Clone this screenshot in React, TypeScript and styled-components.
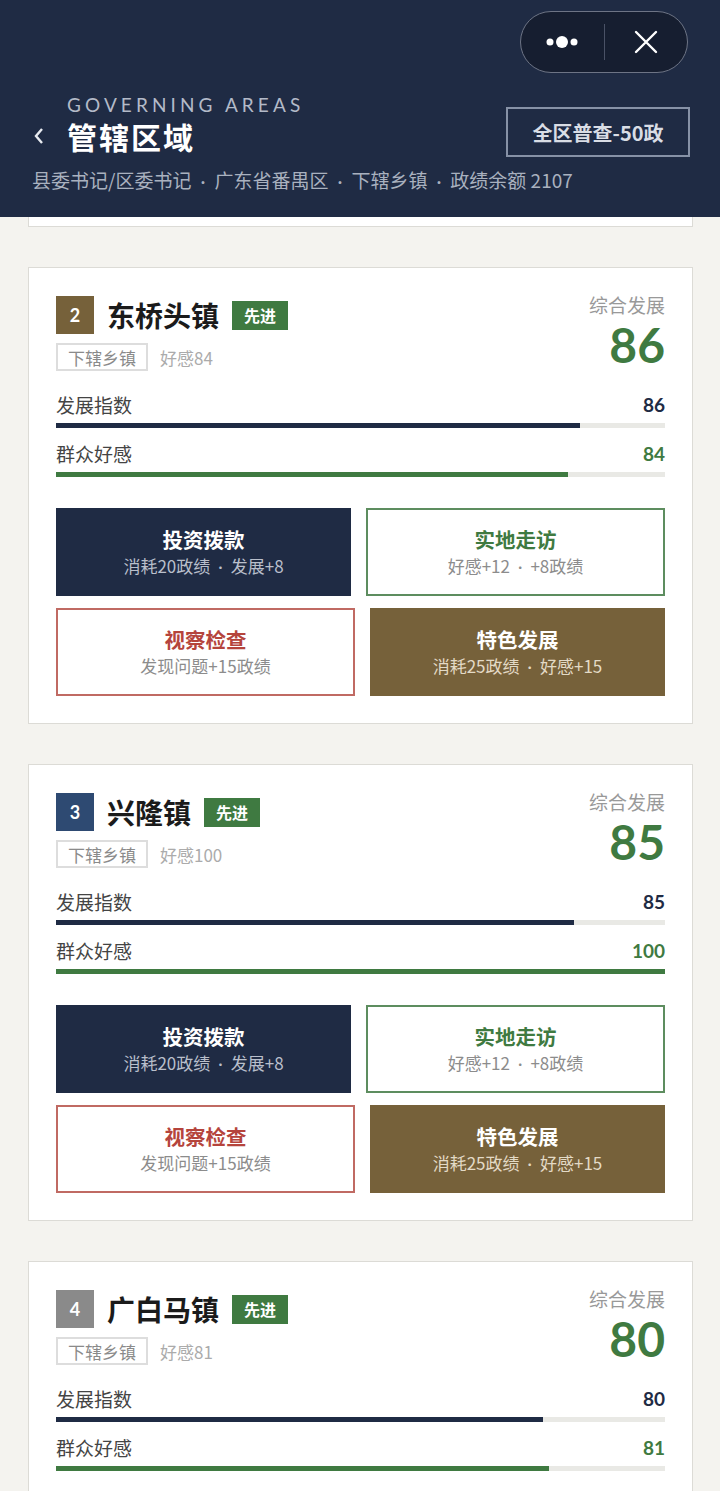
import React from "react";
import styled, { createGlobalStyle } from "styled-components";

const GlobalStyle = createGlobalStyle`
  html, body {
    margin: 0;
    padding: 0;
    background: #f4f3ef;
    font-family: "Noto Sans CJK SC", "Noto Sans", sans-serif;
  }
  body {
    height: 1491px;
    overflow: hidden;
  }
`;

const navy = "#1f2b44";
const green = "#3f7a41";
const red = "#b5443c";
const brown = "#76613a";

const Page = styled.div`
  width: 720px;
  height: 1491px;
  overflow: hidden;
`;

const Header = styled.header`
  height: 217px;
  box-sizing: border-box;
  background: ${navy};
  padding: 11px 32px 0 32px;
  display: flex;
  flex-direction: column;
`;

const CapsuleRow = styled.div`
  display: flex;
  justify-content: flex-end;
`;

const Capsule = styled.div`
  width: 168px;
  height: 62px;
  box-sizing: border-box;
  border: 1.5px solid #6d7485;
  border-radius: 31px;
  background: #161e30;
  display: flex;
  align-items: center;
`;

const CapsuleHalf = styled.div`
  flex: 1;
  display: flex;
  justify-content: center;
  align-items: center;
`;

const CapsuleDivider = styled.div`
  width: 1px;
  height: 36px;
  background: #4a5266;
`;

const TitleRow = styled.div`
  display: flex;
  align-items: flex-end;
  justify-content: space-between;
  margin-top: 21px;
`;

const TitleLeft = styled.div`
  display: flex;
  align-items: flex-end;
`;

const Back = styled.div`
  width: 35px;
  height: 40px;
  display: flex;
  align-items: center;
`;

const TitleText = styled.div`
  display: flex;
  flex-direction: column;
`;

const EnTitle = styled.div`
  font-family: "Lato", "Noto Sans", sans-serif;
  font-size: 19px;
  letter-spacing: 4.1px;
  color: #b3bac8;
  line-height: 22px;
`;

const CnTitle = styled.div`
  font-size: 30px;
  font-weight: 700;
  letter-spacing: 2px;
  color: #ffffff;
  line-height: 40px;
`;

const SurveyButton = styled.div`
  width: 184px;
  height: 50px;
  box-sizing: border-box;
  border: 2px solid #8691a6;
  color: #d9dde5;
  font-size: 20px;
  font-weight: 700;
  display: flex;
  align-items: center;
  justify-content: center;
  margin-right: -2px;
  margin-bottom: -1px;
`;

const SubLine = styled.div`
  margin-top: 10px;
  font-size: 19px;
  color: #a9b1bf;
  line-height: 28px;
  white-space: nowrap;
`;

const Dot = styled.span<{ $gap?: number }>`
  font-family: "Lato", sans-serif;
  margin: 0 ${(p) => p.$gap ?? 9}px;
`;

const List = styled.div`
  padding: 0 27px 0 28px;
  display: flex;
  flex-direction: column;
  gap: 40px;
`;

const CardStub = styled.div`
  height: 9px;
  background: #fff;
  border: 1.5px solid #dcdbd6;
  border-top: none;
`;

const Card = styled.div`
  background: #fff;
  border: 1.5px solid #dcdbd6;
  padding: 28px 27px 27px 27px;
  display: flex;
  flex-direction: column;
`;

const Top = styled.div`
  display: flex;
  justify-content: space-between;
`;

const NameRow = styled.div`
  display: flex;
  align-items: center;
  gap: 13px;
  height: 38px;
`;

const Rank = styled.div<{ $bg: string }>`
  width: 38px;
  height: 38px;
  background: ${(p) => p.$bg};
  color: #fff;
  font-family: "Lato", "Noto Sans", sans-serif;
  font-weight: 700;
  font-size: 18px;
  display: flex;
  align-items: center;
  justify-content: center;
`;

const Name = styled.div`
  font-size: 28px;
  font-weight: 700;
  color: #1b1b1b;
  line-height: 38px;
`;

const Tag = styled.div`
  background: ${green};
  color: #fff;
  font-size: 16px;
  font-weight: 700;
  height: 29px;
  padding: 0 12px;
  display: flex;
  align-items: center;
`;

const MetaRow = styled.div`
  display: flex;
  align-items: center;
  gap: 12px;
  margin-top: 9px;
`;

const MetaBox = styled.div`
  height: 28px;
  box-sizing: border-box;
  border: 2px solid #dddddd;
  padding: 0 10px;
  color: #8a8a8a;
  font-size: 17px;
  display: flex;
  align-items: center;
`;

const MetaText = styled.div`
  color: #ababab;
  font-size: 17px;
`;

const Score = styled.div`
  display: flex;
  flex-direction: column;
  align-items: flex-end;
`;

const ScoreLabel = styled.div`
  color: #999;
  font-size: 19px;
  line-height: 24px;
  margin-top: -3px;
`;

const ScoreValue = styled.div`
  color: ${green};
  font-family: "Lato", "Noto Sans", sans-serif;
  font-size: 48px;
  font-weight: 700;
  line-height: 44px;
  margin-top: 6px;
`;

const Stat = styled.div<{ $first?: boolean }>`
  margin-top: ${(p) => (p.$first ? "20px" : "12px")};
`;

const StatHead = styled.div`
  display: flex;
  justify-content: space-between;
  align-items: center;
  height: 26px;
`;

const StatLabel = styled.div`
  font-size: 19px;
  color: #444;
`;

const StatValue = styled.div<{ $color: string }>`
  font-family: "Lato", "Noto Sans", sans-serif;
  font-size: 19px;
  font-weight: 700;
  color: ${(p) => p.$color};
`;

const Track = styled.div`
  height: 5px;
  background: #e9e9e5;
  margin-top: 6px;
`;

const Fill = styled.div<{ $color: string }>`
  height: 100%;
  background: ${(p) => p.$color};
`;

const Actions = styled.div`
  margin-top: 31px;
  display: flex;
  flex-direction: column;
  gap: 12px;
`;

const ActionRow = styled.div`
  display: flex;
  gap: 15px;
`;

type Variant = "navy" | "green" | "red" | "brown";

const variantStyle: Record<
  Variant,
  { bg: string; border: string; title: string; sub: string }
> = {
  navy: { bg: navy, border: "none", title: "#fff", sub: "#b9bfcb" },
  green: { bg: "#fff", border: `2px solid #5d8d5f`, title: green, sub: "#8c8c8c" },
  red: { bg: "#fff", border: `2px solid #c06a63`, title: red, sub: "#8c8c8c" },
  brown: { bg: brown, border: "none", title: "#fff", sub: "#e3dac6" },
};

const Action = styled.div<{ $v: Variant }>`
  flex: 1 1 0;
  box-sizing: content-box;
  height: ${(p) => (variantStyle[p.$v].border === "none" ? "88px" : "84px")};
  background: ${(p) => variantStyle[p.$v].bg};
  border: ${(p) => variantStyle[p.$v].border};
  display: flex;
  flex-direction: column;
  align-items: center;
  justify-content: center;
`;

const ActionTitle = styled.div<{ $v: Variant }>`
  font-size: 20.5px;
  font-weight: 700;
  color: ${(p) => variantStyle[p.$v].title};
  line-height: 28px;
`;

const ActionSub = styled.div<{ $v: Variant }>`
  font-size: 17px;
  color: ${(p) => variantStyle[p.$v].sub};
  line-height: 26px;
`;

type Town = {
  rank: number;
  rankColor: string;
  name: string;
  favor: number;
  dev: number;
};

const towns: Town[] = [
  { rank: 2, rankColor: brown, name: "东桥头镇", favor: 84, dev: 86 },
  { rank: 3, rankColor: "#2e4a72", name: "兴隆镇", favor: 100, dev: 85 },
  { rank: 4, rankColor: "#8a8a8a", name: "广白马镇", favor: 81, dev: 80 },
];

const DotsIcon = () => (
  <svg width="40" height="20" viewBox="0 0 40 20">
    <circle cx="8" cy="10" r="3.5" fill="#fff" />
    <circle cx="20" cy="10" r="6" fill="#fff" />
    <circle cx="32" cy="10" r="3.5" fill="#fff" />
  </svg>
);

const CloseIcon = () => (
  <svg width="26" height="26" viewBox="0 0 26 26">
    <path d="M3 3 L23 23 M23 3 L3 23" stroke="#fff" strokeWidth="2.4" strokeLinecap="round" />
  </svg>
);

const BackIcon = () => (
  <svg width="14" height="20" viewBox="0 0 14 20">
    <path d="M10 3 L4 10 L10 17" stroke="#e8ebf0" strokeWidth="2.4" fill="none" />
  </svg>
);

const TownCard: React.FC<{ town: Town }> = ({ town }) => (
  <Card>
    <Top>
      <div>
        <NameRow>
          <Rank $bg={town.rankColor}>{town.rank}</Rank>
          <Name>{town.name}</Name>
          <Tag>先进</Tag>
        </NameRow>
        <MetaRow>
          <MetaBox>下辖乡镇</MetaBox>
          <MetaText>好感{town.favor}</MetaText>
        </MetaRow>
      </div>
      <Score>
        <ScoreLabel>综合发展</ScoreLabel>
        <ScoreValue>{town.dev}</ScoreValue>
      </Score>
    </Top>
    <Stat $first>
      <StatHead>
        <StatLabel>发展指数</StatLabel>
        <StatValue $color={navy}>{town.dev}</StatValue>
      </StatHead>
      <Track>
        <Fill $color={navy} style={{ width: `${town.dev}%` }} />
      </Track>
    </Stat>
    <Stat>
      <StatHead>
        <StatLabel>群众好感</StatLabel>
        <StatValue $color={green}>{town.favor}</StatValue>
      </StatHead>
      <Track>
        <Fill $color={green} style={{ width: `${town.favor}%` }} />
      </Track>
    </Stat>
    <Actions>
      <ActionRow>
        <Action $v="navy">
          <ActionTitle $v="navy">投资拨款</ActionTitle>
          <ActionSub $v="navy">
            消耗20政绩<Dot $gap={8}>·</Dot>发展+8
          </ActionSub>
        </Action>
        <Action $v="green">
          <ActionTitle $v="green">实地走访</ActionTitle>
          <ActionSub $v="green">
            好感+12<Dot $gap={8}>·</Dot>+8政绩
          </ActionSub>
        </Action>
      </ActionRow>
      <ActionRow>
        <Action $v="red">
          <ActionTitle $v="red">视察检查</ActionTitle>
          <ActionSub $v="red">发现问题+15政绩</ActionSub>
        </Action>
        <Action $v="brown">
          <ActionTitle $v="brown">特色发展</ActionTitle>
          <ActionSub $v="brown">
            消耗25政绩<Dot $gap={8}>·</Dot>好感+15
          </ActionSub>
        </Action>
      </ActionRow>
    </Actions>
  </Card>
);

const App: React.FC = () => {
  return (
    <Page>
      <GlobalStyle />
      <Header>
        <CapsuleRow>
          <Capsule>
            <CapsuleHalf>
              <DotsIcon />
            </CapsuleHalf>
            <CapsuleDivider />
            <CapsuleHalf>
              <CloseIcon />
            </CapsuleHalf>
          </Capsule>
        </CapsuleRow>
        <TitleRow>
          <TitleLeft>
            <Back>
              <BackIcon />
            </Back>
            <TitleText>
              <EnTitle>GOVERNING AREAS</EnTitle>
              <CnTitle>管辖区域</CnTitle>
            </TitleText>
          </TitleLeft>
          <SurveyButton>全区普查-50政</SurveyButton>
        </TitleRow>
        <SubLine>
          县委书记/区委书记<Dot>·</Dot>广东省番禺区<Dot>·</Dot>下辖乡镇<Dot>·</Dot>政绩余额 2107
        </SubLine>
      </Header>
      <List>
        <CardStub />
        {towns.map((t) => (
          <TownCard key={t.rank} town={t} />
        ))}
      </List>
    </Page>
  );
};

export default App;
